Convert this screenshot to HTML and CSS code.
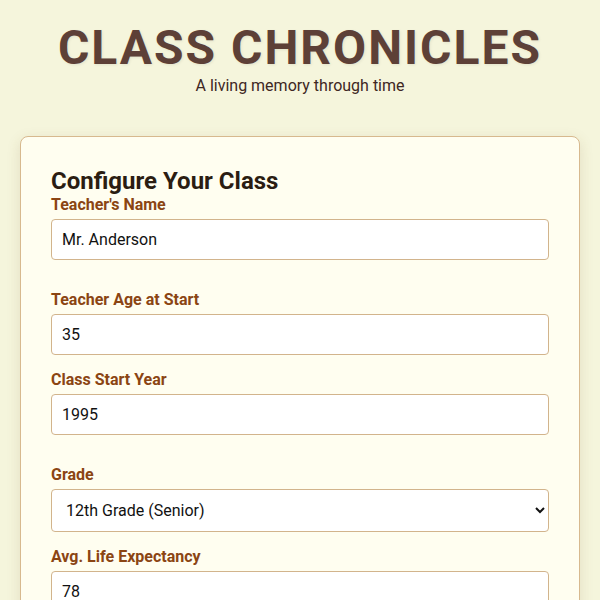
FILE: index.html
```html
<!DOCTYPE html>
<html lang="en">
<head>
<meta charset="utf-8">
<title>Class Chronicles</title>
<link rel="stylesheet" href="styles.css">
</head>
<body>
<div class="page">
  <header class="header">
    <h1 class="title">CLASS CHRONICLES</h1>
    <p class="subtitle">A living memory through time</p>
  </header>
  <section class="card">
    <h2 class="card-title">Configure Your Class</h2>
    <div class="field spaced">
      <label class="label" for="teacher">Teacher's Name</label>
      <input class="control" id="teacher" type="text" value="Mr. Anderson">
    </div>
    <div class="field">
      <label class="label" for="age">Teacher Age at Start</label>
      <input class="control" id="age" type="number" value="35">
    </div>
    <div class="field spaced">
      <label class="label" for="year">Class Start Year</label>
      <input class="control" id="year" type="number" value="1995">
    </div>
    <div class="field">
      <label class="label" for="grade">Grade</label>
      <select class="control select" id="grade">
        <option>12th Grade (Senior)</option>
      </select>
    </div>
    <div class="field">
      <label class="label" for="life">Avg. Life Expectancy</label>
      <input class="control" id="life" type="number" value="78">
    </div>
  </section>
</div>
</body>
</html>
```

FILE: styles.css
```css
html, body {
  margin: 0;
  padding: 0;
  background: #f5f5dc;
}
body {
  font-family: Roboto, "Liberation Sans", Arial, sans-serif;
  color: #3e2723;
}
.page {
  padding: 20px;
}
.header {
  text-align: center;
  margin-bottom: 40px;
}
.title {
  margin: 0;
  font-size: 48px;
  line-height: 56px;
  font-weight: 700;
  letter-spacing: 2px;
  color: #5d4037;
  text-shadow: 1px 1px 3px rgba(0, 0, 0, 0.08);
}
.subtitle {
  margin: 0;
  font-size: 16px;
  line-height: 20px;
  color: #3e2723;
}
.card {
  background: #fffef0;
  border: 1px solid #d7b98e;
  border-radius: 8px;
  padding: 30px;
  box-shadow: 0 4px 14px rgba(120, 90, 40, 0.15);
}
.card-title {
  margin: 0;
  font-size: 24px;
  line-height: 28px;
  font-weight: 700;
  color: #2b1d12;
}
.field {
  margin-bottom: 15px;
}
.field.spaced {
  margin-bottom: 30px;
}
.label {
  display: block;
  font-size: 16px;
  line-height: 19px;
  font-weight: 700;
  color: #8b4513;
  margin-bottom: 5px;
}
.control {
  display: block;
  box-sizing: border-box;
  width: 100%;
  padding: 10px;
  border: 1px solid #d2b48c;
  border-radius: 4px;
  background: #ffffff;
  font-family: Roboto, "Liberation Sans", Arial, sans-serif;
  font-size: 16px;
  line-height: normal;
  color: #111111;
  appearance: textfield;
  -moz-appearance: textfield;
}
.control::-webkit-outer-spin-button,
.control::-webkit-inner-spin-button {
  -webkit-appearance: none;
  margin: 0;
}
.select {
  appearance: auto;
}
```
